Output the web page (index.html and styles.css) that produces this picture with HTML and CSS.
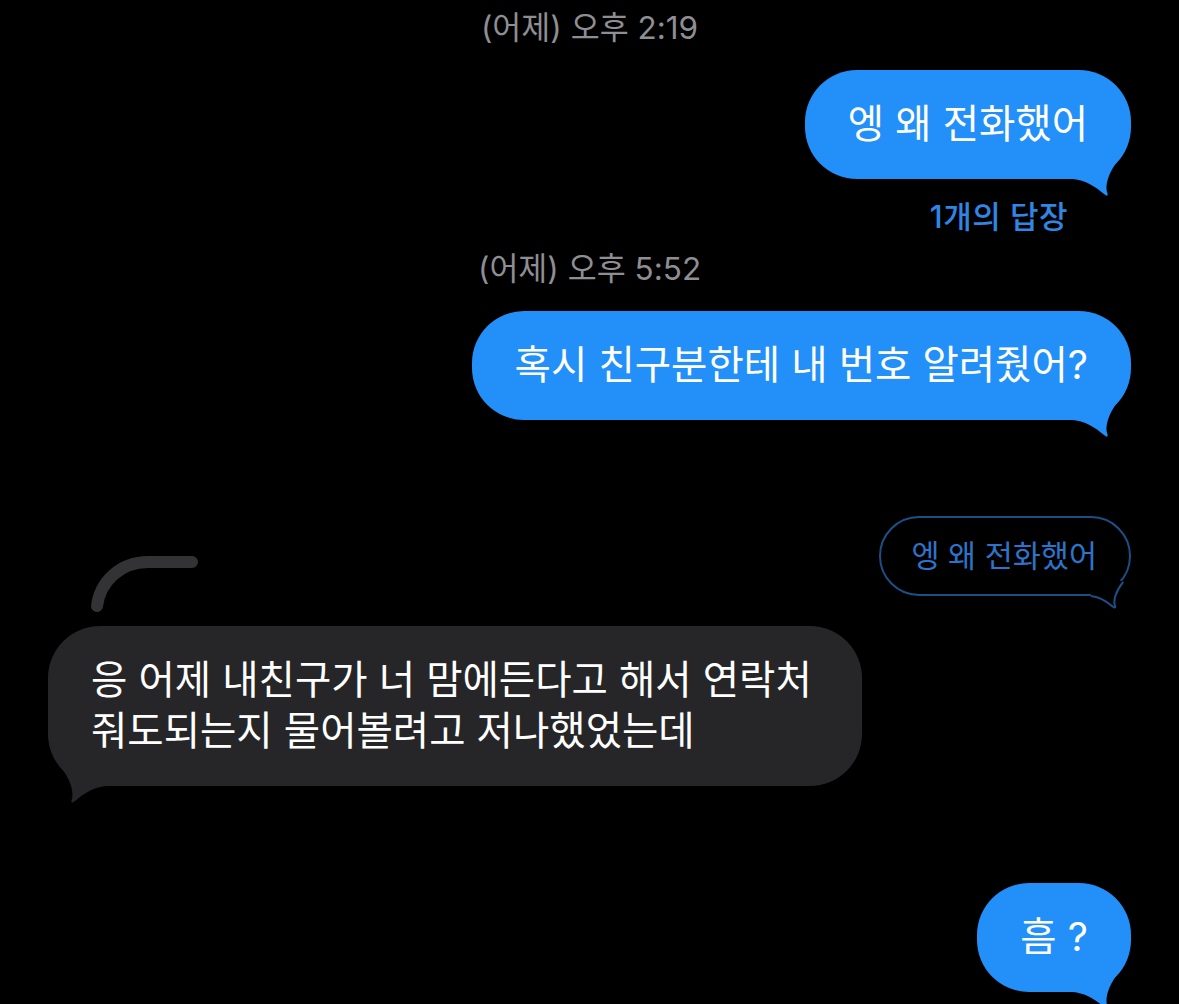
FILE: index.html
```html
<!DOCTYPE html>
<html lang="ko">
<head>
<meta charset="utf-8">
<title>메시지</title>
<link rel="stylesheet" href="styles.css">
</head>
<body>
<main class="thread">
  <div class="stamp stamp-first">(어제) 오후 2:19</div>

  <div class="row row-out">
    <div class="bubble bubble-out">엥 왜 전화했어<svg class="tail tail-out" viewBox="0 0 54 44" aria-hidden="true"><path d="M0 0V24H4C16 25 27 32 35 39Q39.5 42.5 38.5 38.5C35.5 31 39 18 50 4L40 0Z"/></svg></div>
  </div>
  <div class="replies">1개의 답장</div>

  <div class="stamp">(어제) 오후 5:52</div>

  <div class="row row-out">
    <div class="bubble bubble-out">혹시 친구분한테 내 번호 알려줬어?<svg class="tail tail-out" viewBox="0 0 54 44" aria-hidden="true"><path d="M0 0V24H4C16 25 27 32 35 39Q39.5 42.5 38.5 38.5C35.5 31 39 18 50 4L40 0Z"/></svg></div>
  </div>

  <div class="row row-out row-quote">
    <div class="bubble bubble-quote">엥 왜 전화했어<svg class="tail tail-quote" viewBox="0 0 54 44" aria-hidden="true"><path class="tail-cover" d="M4 0V24C16 25 27 32 35 39Q39.5 42.5 38.5 38.5C35.5 31 39 18 50 4L40 0Z"/><path class="tail-edge" d="M4 24C16 25 27 32 35 39Q39.5 42.5 38.5 38.5C35.5 31 39 18 50 4"/></svg></div>
  </div>

  <div class="row row-in">
    <svg class="reply-line" viewBox="0 0 116 60" aria-hidden="true"><path d="M11 52C14 28 34 8 62 8L106 8"/></svg>
    <div class="bubble bubble-in">응 어제 내친구가 너 맘에든다고 해서 연락처 줘도되는지 물어볼려고 저나했었는데<svg class="tail tail-in" viewBox="0 0 54 44" aria-hidden="true"><path d="M0 0V24H4C16 25 27 32 35 39Q39.5 42.5 38.5 38.5C35.5 31 39 18 50 4L40 0Z"/></svg></div>
  </div>

  <div class="row row-out row-last">
    <div class="bubble bubble-out">흠 ?<svg class="tail tail-out" viewBox="0 0 54 44" aria-hidden="true"><path d="M0 0V24H4C16 25 27 32 35 39Q39.5 42.5 38.5 38.5C35.5 31 39 18 50 4L40 0Z"/></svg></div>
  </div>
</main>
</body>
</html>
```

FILE: styles.css
```css
* {
  box-sizing: border-box;
}

html,
body {
  margin: 0;
  background: #000;
}

body {
  width: 1179px;
  height: 1004px;
  overflow: hidden;
  font-family: "Inter", "Noto Sans CJK KR", sans-serif;
  color: #fff;
}

.thread {
  display: flex;
  flex-direction: column;
  padding: 11px 48px 0;
}

/* date / time separators */
.stamp {
  text-align: center;
  color: #8e8e93;
  font-size: 31.5px;
  line-height: 34px;
  margin-top: 18px;
}

.stamp-first {
  margin-top: 0;
}

.row {
  display: flex;
  position: relative;
  margin-top: 25px;
}

.row-out {
  justify-content: flex-end;
}

.row-in {
  justify-content: flex-start;
  margin-top: 30px;
}

.row-quote {
  margin-top: 96px;
}

.row-last {
  margin-top: 97px;
}

/* message bubbles */
.bubble {
  position: relative;
  font-size: 39.5px;
  line-height: 51px;
  padding: 29px 43px;
  border-radius: 52px;
  word-break: keep-all;
}

.bubble-out {
  background: #2290f8;
}

.bubble-in {
  background: #262628;
  max-width: 814px;
  padding-right: 38px;
}

.bubble-quote {
  font-size: 30.5px;
  line-height: 40px;
  padding: 18px 32px 18px 30px;
  border-radius: 40px;
  border: 2px solid #1d4f86;
  color: #2c74c9;
}

/* bubble tails */
.tail {
  position: absolute;
  width: 54px;
  height: 44px;
  bottom: -20px;
  overflow: visible;
}

.tail-out {
  right: 8px;
  fill: #2290f8;
}

.tail-in {
  left: 8px;
  fill: #262628;
  transform: scaleX(-1);
}

.tail-quote {
  width: 38px;
  height: 31px;
  right: 3px;
  bottom: -16px;
}

.tail-cover {
  fill: #000;
}

.tail-edge {
  fill: none;
  stroke: #1d4f86;
  stroke-width: 2px;
  vector-effect: non-scaling-stroke;
}

/* thread connector above the quoted reply */
.reply-line {
  position: absolute;
  left: 38px;
  top: -72px;
  width: 116px;
  height: 60px;
  fill: none;
  stroke: #333335;
  stroke-width: 12px;
  stroke-linecap: round;
}

/* reply count under a bubble */
.replies {
  align-self: flex-end;
  margin-top: 21px;
  margin-right: 63px;
  font-size: 31px;
  line-height: 34px;
  font-weight: 500;
  letter-spacing: 0.5px;
  color: #2f86e3;
}
```
